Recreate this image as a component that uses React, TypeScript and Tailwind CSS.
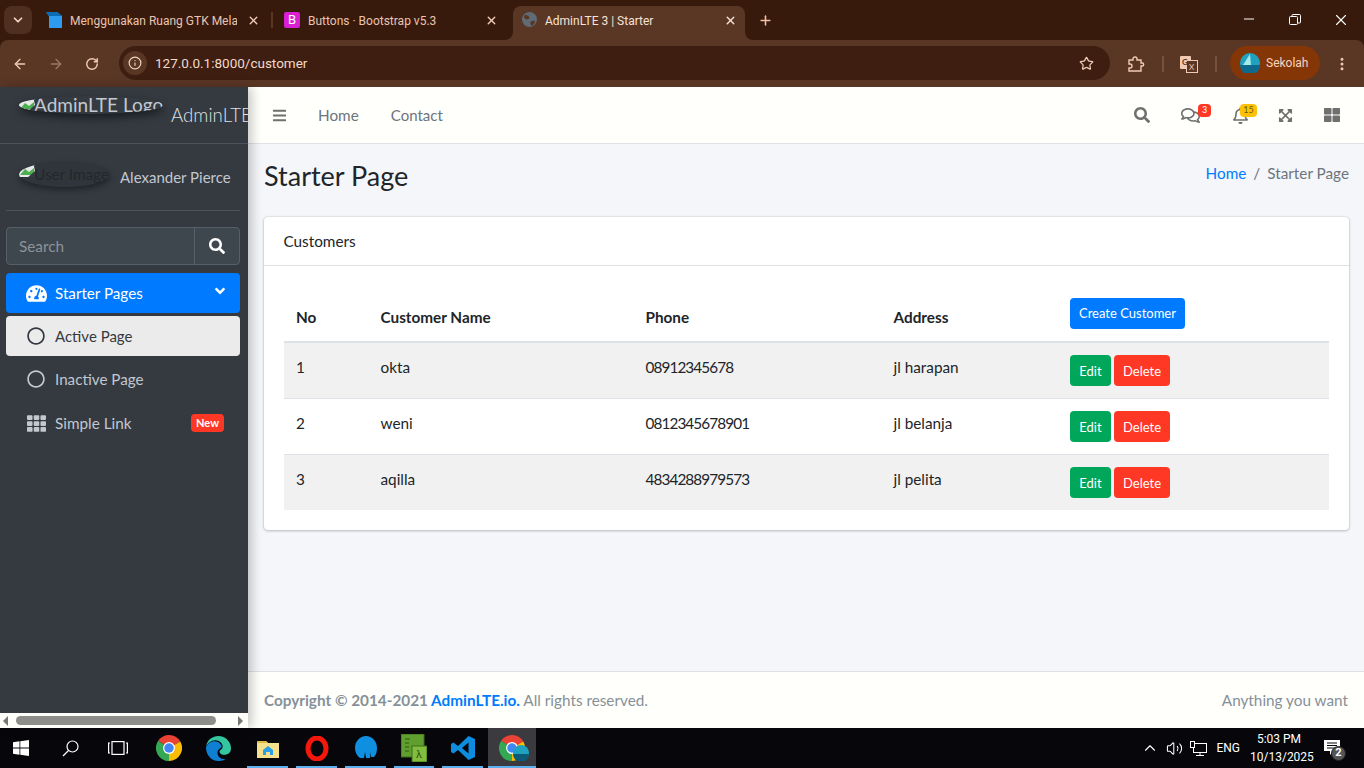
import React from "react";
import { FaSearch, FaBars, FaRegComments, FaRegBell, FaExpandArrowsAlt, FaThLarge, FaTachometerAlt, FaRegCircle, FaTh, FaAngleDown } from "react-icons/fa";
import { LuChevronDown, LuX, LuPlus, LuArrowLeft, LuArrowRight, LuRotateCw, LuInfo, LuStar, LuEllipsisVertical, LuMinus, LuChevronUp, LuVolume2 } from "react-icons/lu";

const sys = "font-['Roboto','Noto_Sans',sans-serif]";

function BrokenImg() {
  return (
    <svg width="16" height="16" viewBox="0 0 16 16" className="shrink-0">
      <path d="M0 0h14l2 2v10l-3 3H0z" fill="#e8e8e8" />
      <path d="M1 13l5-6 4 3 5-4v7H1z" fill="#4caf50" />
      <path d="M14 0l2 9-8 7h8V0z" fill="#343a40" />
    </svg>
  );
}

function Globe() {
  return (
    <svg width="15" height="15" viewBox="0 0 16 16">
      <circle cx="8" cy="8" r="8" fill="#5f6b75" />
      <path d="M3 3l4 1 1 3-3 1-3-2zM9 10l4-1 1 2-3 4-2-2z" fill="#5a3625" />
    </svg>
  );
}

function Tabs() {
  return (
    <div className={`h-10 flex items-start text-xs ${sys}`}>
      <div className="ml-1 mt-1.5 w-7 h-7 rounded-lg bg-[#4f2f20] flex items-center justify-center text-[#f3d5c5]">
        <LuChevronDown size={14} strokeWidth={3} />
      </div>
      <div className="ml-[14px] mt-3 w-4 h-4 flex">
        <svg width="16" height="16" viewBox="0 0 16 16">
          <path d="M0 0h11l5 4v12H3V4z" fill="#2d9bf0" />
          <path d="M0 0h11l5 4H3z" fill="#0b6bb5" />
        </svg>
      </div>
      <div className="ml-2 mt-[13px] w-[167px] overflow-hidden whitespace-nowrap text-[#e9c4b0] text-[12px] leading-[16px]">Menggunakan Ruang GTK Melalui</div>
      <LuX size={13} strokeWidth={2.5} className="ml-[10px] mt-[14px] text-[#f0cbb8]" />
      <div className="ml-[11px] mt-3 w-0.5 h-4 bg-[#5a3625]" />
      <div className="ml-[11px] mt-3 w-4 h-4 rounded-[2px] bg-[#d91ed4] text-white flex items-center justify-center text-[13px]">B</div>
      <div className="ml-2 mt-[13px] w-[150px] whitespace-nowrap text-[#e9c4b0] text-[12px] leading-[16px]">Buttons · Bootstrap v5.3</div>
      <LuX size={13} strokeWidth={2.5} className="ml-[27px] mt-[14px] text-[#f0cbb8]" />
      <div className="relative ml-[15px] mt-1.5 w-[232px] h-[34px] rounded-t-lg bg-[#5a3625] flex items-start pl-[9px]">
        <svg width="8" height="8" viewBox="0 0 8 8" className="absolute -left-2 bottom-0"><path d="M8 0v8H0a8 8 0 008-8z" fill="#5a3625" /></svg>
        <svg width="8" height="8" viewBox="0 0 8 8" className="absolute -right-2 bottom-0"><path d="M0 0v8h8a8 8 0 01-8-8z" fill="#5a3625" /></svg>
        <div className="mt-[6px] flex"><Globe /></div>
        <div className="ml-2 mt-[7px] w-[182px] whitespace-nowrap text-[#f5e3d8] text-[12px] leading-[16px]">AdminLTE 3 | Starter</div>
        <LuX size={13} strokeWidth={2.5} className="mt-[8px] -ml-[3px] text-[#f8e2d6]" />
      </div>
      <LuPlus size={15} strokeWidth={2.5} className="ml-[13px] mt-[13px] text-[#f0c0a6]" />
      <div className="ml-auto flex text-white mt-[11px]">
        <LuMinus size={16} strokeWidth={1.5} className="mr-[32px]" />
        <svg width="12" height="12" viewBox="0 0 12 12" fill="none" stroke="white" strokeWidth="1" className="mr-[31px] mt-[3px]">
          <rect x="0.5" y="2.5" width="8" height="8" rx="1" /><path d="M3 2V1.5a1 1 0 011-1h6.5a1 1 0 011 1V8a1 1 0 01-1 1H9" />
        </svg>
        <LuX size={18} strokeWidth={1.5} className="mr-[14px]" />
      </div>
    </div>
  );
}

function Toolbar() {
  return (
    <div className="h-[47px] bg-[#5a3625] rounded-t-lg flex items-center text-[#f2c9b3]">
      <LuArrowLeft size={16} strokeWidth={2} className="ml-3" />
      <LuArrowRight size={16} strokeWidth={2} className="ml-[20px] text-[#9a7765]" />
      <LuRotateCw size={14} strokeWidth={2.5} className="ml-[21px]" />
      <div className="ml-5 -mt-px w-[991px] h-[34px] rounded-full bg-[#3d1e10] flex items-center pl-[4px] pr-[16px]">
        <div className="w-6 h-6 rounded-full bg-[#5a3625] flex items-center justify-center"><LuInfo size={14} strokeWidth={2} className="text-[#f3d5c5]" /></div>
        <div className={`ml-2 text-[13.5px] text-[#f3d9ca] ${sys}`}>127.0.0.1:8000/customer</div>
        <LuStar size={15} strokeWidth={2} className="ml-auto text-[#f0cbb8]" />
      </div>
      <svg width="17" height="16" viewBox="0 0 17 16" fill="none" stroke="#f2c9b3" strokeWidth="1.4" className="ml-[18px]">
        <path d="M1 4h4V3a2 2 0 014 0v1h4v3h1.2a1.5 1.5 0 010 3H13v5H1v-3h1a2 2 0 000-4H1z" />
      </svg>
      <div className="ml-[17px] w-0.5 h-4 bg-[#75513e]" />
      <svg width="18" height="18" viewBox="0 0 18 18" className="ml-[16px]">
        <rect x="0" y="1" width="11" height="13" rx="1" fill="#f2c9b3" />
        <rect x="6.5" y="5.5" width="11" height="12" fill="#5a3625" stroke="#f2c9b3" />
        <text x="2" y="10" fontSize="8" fontWeight="700" fill="#5a3625">G</text>
        <text x="9" y="14.5" fontSize="8" fill="#f2c9b3">X</text>
      </svg>
      <div className="ml-[17px] w-0.5 h-4 bg-[#75513e]" />
      <div className={`ml-[13px] -mt-px w-[90px] h-[34px] rounded-full bg-[#843607] flex items-center pl-2.5 text-[12px] text-[#f7d5c1] ${sys}`}>
        <svg width="20" height="20" viewBox="0 0 20 20" className="mr-1.5 shrink-0">
          <circle cx="10" cy="10" r="10" fill="#1ea2c0" />
          <path d="M10 1l1 11H3z" fill="#a7e8e8" />
          <path d="M0 12h20a10 10 0 01-20 0z" fill="#0d6a8c" />
        </svg>
        Sekolah
      </div>
      <LuEllipsisVertical size={16} strokeWidth={2.5} className="ml-[14px]" />
    </div>
  );
}

function Sidebar() {
  return (
    <div className="relative z-10 w-[248px] shrink-0 flex flex-col bg-[#343a40] shadow-[4px_0_10px_rgba(0,0,0,0.22)] text-[#c2c7d0]">
      <div className="h-[57px] border-b border-[#4b545c] flex items-start overflow-hidden whitespace-nowrap">
        <div className="ml-[19px] mt-[9px] w-[144px] h-[18px] rounded-[50%] overflow-hidden shadow-[0_4px_8px_rgba(0,0,0,0.5)] flex items-start shrink-0">
          <BrokenImg />
          <span className="-ml-[1px] -mt-[2px] text-[19px] leading-[22px] text-[#c2c7d0]">AdminLTE Logo</span>
        </div>
        <div className="ml-2 mt-[14px] text-[18.7px] leading-[28px] font-light text-[#dfe3e8]">AdminLTE 3</div>
      </div>
      <div className="ml-[6px] mr-2 h-[67px] border-b border-[#4b545c] flex items-start">
        <div className="ml-[13px] mt-[18px] w-[91px] h-[25px] rounded-[50%] overflow-hidden shadow-[0_3px_6px_rgba(0,0,0,0.4)] flex items-start shrink-0 bg-[#30353b]">
          <BrokenImg />
          <span className="-ml-[1px] mt-[1px] text-[15.3px] leading-[22px] text-[#23272b] whitespace-nowrap">User Image</span>
        </div>
        <div className="ml-2.5 mt-[21px] text-[15px] leading-[24px]">Alexander Pierce</div>
      </div>
      <div className="ml-[6px] mr-2 mt-4 h-[38px] flex rounded border border-[#56606a] bg-[#3f474e]">
        <div className="flex-1 pl-3 text-[15.3px] leading-[36px] text-[#8b939b]">Search</div>
        <div className="w-[45px] border-l border-[#56606a] flex items-center justify-center text-white"><FaSearch size={16} /></div>
      </div>
      <div className="ml-[6px] mr-2 mt-2 flex flex-col gap-[3px]">
        <div className="h-10 rounded bg-[#007bff] text-white flex items-center pl-5 pr-[12px]">
          <FaTachometerAlt size={21} className="mr-[8px]" />
          <span className="text-[15.2px]">Starter Pages</span>
          <FaAngleDown size={16} className="ml-auto -mt-1" />
        </div>
        <div className="h-10 rounded bg-[#ebebeb] text-[#343a40] flex items-center pl-[21px]">
          <FaRegCircle size={18} className="mr-[10px]" />
          <span className="text-[15px]">Active Page</span>
        </div>
        <div className="h-10 rounded flex items-center pl-[21px]">
          <FaRegCircle size={18} className="mr-[10px]" />
          <span className="text-[15.2px]">Inactive Page</span>
        </div>
        <div className="h-10 rounded flex items-center pl-[21px] pr-4 pt-0.5">
          <FaTh size={19} className="mr-[9px]" />
          <span className="text-[15.3px]">Simple Link</span>
          <span className="ml-auto w-[33px] h-[18px] rounded bg-[#ff3826] text-white text-[11px] font-bold flex items-center justify-center">New</span>
        </div>
      </div>
      <div className="mt-auto h-[15px] bg-[#fdfdf9] flex items-center text-[#777]">
        <span className="ml-[3px] w-0 h-0 border-y-[5px] border-y-transparent border-r-[5px] border-r-[#777]" />
        <div className="ml-2 w-[200px] h-[9px] rounded-full bg-[#8d8d8b]" />
        <span className="ml-auto mr-[5px] w-0 h-0 border-y-[5px] border-y-transparent border-l-[5px] border-l-[#777]" />
      </div>
    </div>
  );
}

function NavIcon({ children, className }: { children: React.ReactNode; className: string }) {
  return <div className={`relative flex ${className}`}>{children}</div>;
}

function Navbar() {
  return (
    <div className="h-[57px] bg-[#fffffb] border-b border-[#dee2e6] flex items-center text-[#6c757d] pl-6">
      <FaBars size={15} className="mr-[31px] text-[#6f6f6f]" />
      <span className="text-[15.3px] mr-[32px]">Home</span>
      <span className="text-[15px]">Contact</span>
      <NavIcon className="ml-auto"><FaSearch size={16} className="text-[#6f6f6f]" /></NavIcon>
      <NavIcon className="ml-[31px]">
        <FaRegComments size={19} className="text-[#6f6f6f]" />
        <span className="absolute -top-[2px] left-[17px] w-[13px] h-[13px] rounded bg-[#ff3826] text-white text-[9px] flex items-center justify-center">3</span>
      </NavIcon>
      <NavIcon className="ml-[32px]">
        <FaRegBell size={17} className="text-[#6f6f6f]" />
        <span className="absolute -top-[3px] left-[8px] w-[17px] h-[13px] rounded bg-[#ffc107] text-[#6c5a16] text-[9px] flex items-center justify-center">15</span>
      </NavIcon>
      <NavIcon className="ml-[29px]"><FaExpandArrowsAlt size={15} className="text-[#6f6f6f]" /></NavIcon>
      <NavIcon className="ml-[31px] mr-[24px]"><FaThLarge size={16} className="text-[#6f6f6f]" /></NavIcon>
    </div>
  );
}

const rows = [
  ["1", "okta", "08912345678", "jl harapan"],
  ["2", "weni", "0812345678901", "jl belanja"],
  ["3", "aqilla", "4834288979573", "jl pelita"],
];

function Btn({ color, children }: { color: string; children: React.ReactNode }) {
  return <span className={`inline-flex h-[31px] px-[9px] items-center justify-center rounded text-white text-[13px] ${color}`}>{children}</span>;
}

function Card() {
  return (
    <div className="ml-4 mr-[15px] bg-white rounded shadow-[0_0_2px_rgba(0,0,0,0.2),0_1px_3px_rgba(0,0,0,0.2)]">
      <div className="h-[49px] pl-[19.5px] border-b border-[#e0e0e0] flex items-center text-[15.3px] text-[#212529]">Customers</div>
      <div className="p-5">
        <table className="w-full table-fixed border-collapse text-[15.3px] text-[#212529]">
          <colgroup>
            <col className="w-[84.5px]" /><col className="w-[265px]" /><col className="w-[248px]" /><col className="w-[176.5px]" /><col />
          </colgroup>
          <thead>
            <tr className="border-b-2 border-[#dee2e6]">
              <th className="p-3 text-left align-bottom font-bold">No</th>
              <th className="p-3 text-left align-bottom font-bold">Customer Name</th>
              <th className="p-3 text-left align-bottom font-bold">Phone</th>
              <th className="p-3 text-left align-bottom font-bold">Address</th>
              <th className="p-3 text-left align-bottom font-normal"><Btn color="bg-[#007bff]">Create Customer</Btn></th>
            </tr>
          </thead>
          <tbody>
            {rows.map((r, i) => (
              <tr key={r[0]} className={i % 2 === 0 ? "bg-[#f1f1f1] border-t border-[#dee2e6]" : "border-t border-[#dee2e6]"}>
                <td className="px-3 align-top pt-[12px] leading-[24px]">{r[0]}</td>
                <td className="px-3 align-top pt-[12px] leading-[24px]">{r[1]}</td>
                <td className="px-3 align-top pt-[12px] leading-[24px] tracking-[-0.9px]">{r[2]}</td>
                <td className="px-3 align-top pt-[12px] leading-[24px]">{r[3]}</td>
                <td className="p-3 align-top leading-[0]">
                  <span className="inline-flex gap-[3px]"><Btn color="w-[41px] bg-[#00a65a]">Edit</Btn><Btn color="bg-[#ff3826]">Delete</Btn></span>
                </td>
              </tr>
            ))}
          </tbody>
        </table>
      </div>
    </div>
  );
}

function Main() {
  return (
    <div className="flex-1 flex flex-col bg-[#f4f6f9] min-w-0">
      <Navbar />
      <div className="flex-1">
        <div className="h-[73px] pl-4 pr-[15px] flex items-start justify-between">
          <div className="mt-[14px] text-[27px] leading-[36px] text-[#212529]">Starter Page</div>
          <div className="mt-[17px] text-[15.3px] leading-[24px] text-[#6c757d]">
            <span className="text-[#007bff]">Home</span><span className="mx-[7px]">/</span>Starter Page
          </div>
        </div>
        <Card />
      </div>
      <div className="h-[57px] bg-[#fffffb] border-t border-[#dee2e6] px-4 flex items-center justify-between text-[15.3px] text-[#869099]">
        <div><b>Copyright © 2014-2021 <span className="text-[#007bff]">AdminLTE.io.</span></b> All rights reserved.</div>
        <div>Anything you want</div>
      </div>
    </div>
  );
}

function Slot({ x, children, line }: { x: string; children: React.ReactNode; line?: boolean }) {
  return (
    <div className={`relative h-10 flex items-center justify-center ${x}`}>
      {children}
      {line && <span className="absolute bottom-0 left-1 right-1 h-0.5 bg-[#5cb0ef]" />}
    </div>
  );
}

function ChromeLogo({ size = 26 }: { size?: number }) {
  return (
    <svg width={size} height={size} viewBox="0 0 24 24">
      <path d="M12 12L22.4 6A12 12 0 002 5.4z" fill="#ea4335" />
      <path d="M12 12L2 5.4A12 12 0 0012 24z" fill="#34a853" />
      <path d="M12 12L12 24A12 12 0 0022.4 6z" fill="#fbbc05" />
      <circle cx="12" cy="12" r="5.5" fill="#fff" /><circle cx="12" cy="12" r="4.4" fill="#4285f4" />
    </svg>
  );
}

function Taskbar() {
  return (
    <div className={`h-10 bg-[#07070b] flex items-center text-white ${sys}`}>
      <Slot x="w-[48px] -ml-[3px]">
        <svg width="16" height="16" viewBox="0 0 16 16" fill="white"><path d="M0 2.2L6.5 1.3V7.6H0zM7.3 1.2L16 0V7.6H7.3zM0 8.4H6.5V14.7L0 13.8zM7.3 8.4H16V16L7.3 14.8z" /></svg>
      </Slot>
      <Slot x="w-[50px]">
        <svg width="17" height="17" viewBox="0 0 17 17" fill="none" stroke="white" strokeWidth="1.2"><circle cx="10.5" cy="6.5" r="5.5" /><path d="M6.5 10.5L1 16" /></svg>
      </Slot>
      <Slot x="w-[45px]">
        <svg width="20" height="14" viewBox="0 0 20 14" fill="none" stroke="white" strokeWidth="1.2"><rect x="4" y="0.6" width="12" height="12.8" /><path d="M2 2H0.6V12H2M18 2h1.4V12H18" /></svg>
      </Slot>
      <Slot x="w-[50px] ml-[4px]"><ChromeLogo /></Slot>
      <Slot x="w-[49px]">
        <svg width="25" height="25" viewBox="0 0 24 24">
          <path d="M12 0a12 12 0 0112 12c0 4-3 6-6 6-3 0-5-1-5-3 0-2 3-2 3-5 0-3-3-6-7-6S1 7 0 10C1 4 6 0 12 0z" fill="#33c6a0" />
          <path d="M0 11c1-4 5-6 8-6 4 0 7 3 7 5 0 2-4 2-4 6 0 4 4 7 8 6a12 12 0 01-7 2C5 24 0 18 0 11z" fill="#0f7fd4" />
        </svg>
      </Slot>
      <Slot x="w-[49px]" line>
        <svg width="22" height="20" viewBox="0 0 22 20">
          <path d="M0 3h9l2 2h11v15H0z" fill="#f7e08b" /><path d="M0 3h9l2 2H0z" fill="#e0b84c" />
          <path d="M6 12l5-4 5 4v5h-3v-3H9v3H6z" fill="#2b9fe6" />
        </svg>
      </Slot>
      <Slot x="w-[49px]" line>
        <svg width="24" height="25" viewBox="0 0 24 25"><ellipse cx="12" cy="12.5" rx="9" ry="10.5" fill="none" stroke="#f5160c" strokeWidth="5" /></svg>
      </Slot>
      <Slot x="w-[49px]" line>
        <svg width="24" height="25" viewBox="0 0 24 25">
          <path d="M12 0c6 0 11 5 11 12 0 4-1 7-3 9h-3v-5l-1 6h-4l-1-6-1 6H6c-3-2-5-6-5-10C1 5 6 0 12 0z" fill="#0f8fe0" />
        </svg>
      </Slot>
      <Slot x="w-[48px]" line>
        <svg width="26" height="28" viewBox="0 0 26 28">
          <rect x="0" y="0" width="23" height="23" fill="#5f9e2f" stroke="#3c6e1a" />
          <path d="M4 5h5M4 9h4M4 13h4M4 17h4" stroke="#2d5a10" />
          <rect x="11" y="12" width="15" height="16" fill="#82bd3e" stroke="#3c6e1a" />
          <text x="15" y="24" fontSize="11" fill="#2d5a10">λ</text>
        </svg>
      </Slot>
      <Slot x="w-[49px]" line>
        <svg width="24" height="24" viewBox="0 0 24 24">
          <path d="M17.5 0L24 3v18l-6.5 3L7 14l-4.5 3.5L0 16V8l2.5-1.5L7 10zM17.5 6.5L11 12l6.5 5.5z" fill="#0d8ce0" fillRule="evenodd" />
        </svg>
      </Slot>
      <div className="relative w-[48px] ml-[1px] h-10 bg-[#3a3a3f] flex items-center justify-center">
        <ChromeLogo />
        <svg width="16" height="16" viewBox="0 0 16 16" className="absolute left-[25px] top-[17px]">
          <circle cx="8" cy="8" r="8" fill="#1ea2c0" /><path d="M0 9h16a8 8 0 01-16 0z" fill="#0d5a78" />
        </svg>
        <span className="absolute bottom-0 inset-x-0 h-0.5 bg-[#5cb0ef]" />
      </div>
      <LuChevronUp size={18} strokeWidth={1.5} className="ml-auto" />
      <LuVolume2 size={17} strokeWidth={1.5} className="ml-[7px]" />
      <svg width="17" height="15" viewBox="0 0 17 15" fill="none" stroke="white" className="ml-[7px]"><rect x="3.5" y="2.5" width="13" height="9" /><path d="M10 12v2M6 14.5h8" /><rect x="0.5" y="0.5" width="4" height="6" fill="#07070b" /></svg>
      <span className="ml-[9px] text-[12px]">ENG</span>
      <div className="ml-[10px] w-[58px] text-[12px] leading-[18px] text-center">5:03 PM<br />10/13/2025</div>
      <div className="relative ml-[16px] mr-[24px] w-4 h-4">
        <svg width="16" height="15" viewBox="0 0 16 15" fill="white"><path d="M0 0h16v11H9l-3 4v-4H0z" /><path d="M3 3h10M3 5.5h10M3 8h10" stroke="#07070b" /></svg>
        <span className="absolute left-[7px] top-[6px] w-[15px] h-[15px] rounded-full bg-[#555] border border-[#222] text-[11px] font-bold flex items-center justify-center">2</span>
      </div>
    </div>
  );
}

export default function App() {
  return (
    <div className="w-[1364px] h-[768px] overflow-hidden flex flex-col bg-[#371a0c] font-['Lato',sans-serif]">
      <Tabs />
      <Toolbar />
      <div className="flex-1 flex min-h-0">
        <Sidebar />
        <Main />
      </div>
      <Taskbar />
    </div>
  );
}
